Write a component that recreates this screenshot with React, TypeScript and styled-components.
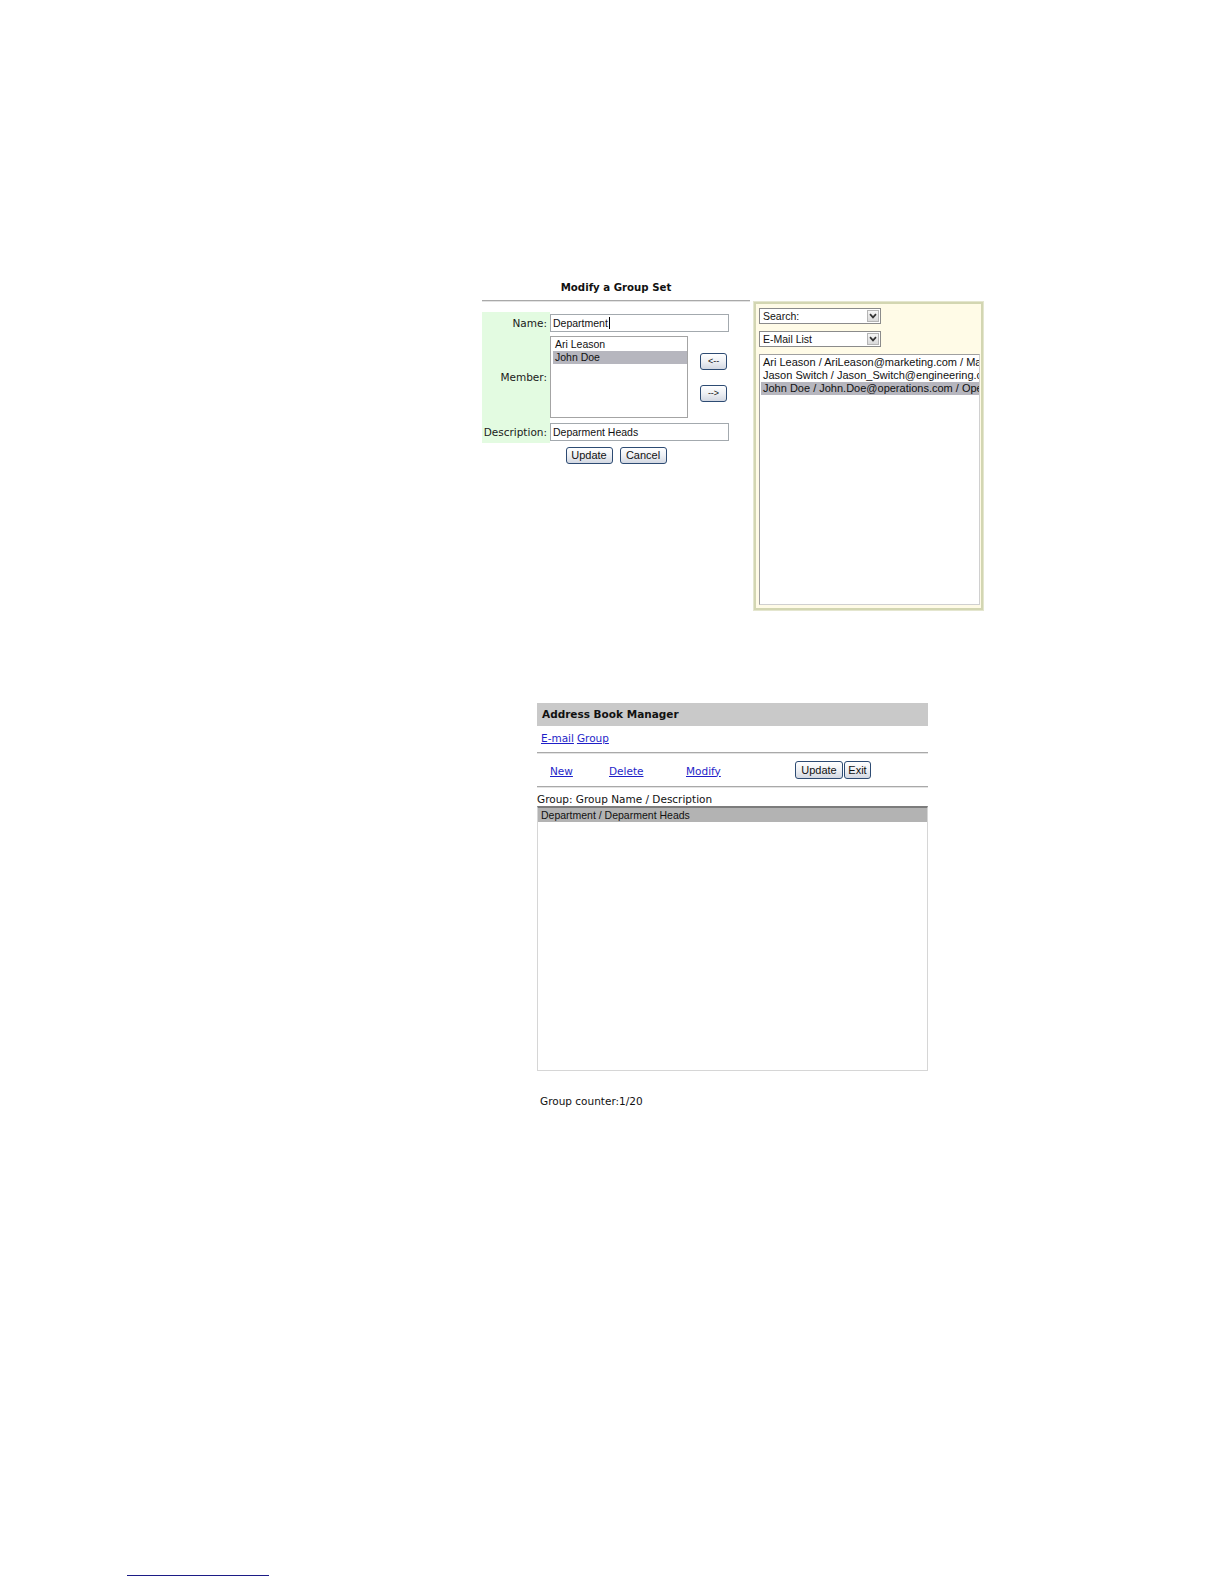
import styled, { createGlobalStyle } from 'styled-components';

const verdana = `'DejaVu Sans', Verdana, sans-serif`;
const arial = `'Liberation Sans', Arial, sans-serif`;

const GlobalStyle = createGlobalStyle`
  html, body {
    margin: 0;
    padding: 0;
    background: #fff;
  }
  body {
    font-family: ${verdana};
    color: #111;
  }
`;

const Page = styled.div`
  width: 1224px;
  min-height: 1584px;
  overflow: hidden;
`;

/* ---------- Modify a Group Set ---------- */

const GroupSet = styled.div`
  display: flex;
  align-items: flex-start;
  gap: 4px;
  margin: 281px 0 0 482px;
`;

const FormColumn = styled.div`
  width: 268px;
`;

const FormTitle = styled.div`
  font: bold 10.2px/14px ${verdana};
  text-align: center;
  color: #111;
`;

const Rule = styled.div<{ $top?: number }>`
  margin-top: ${(p) => p.$top ?? 0}px;
  border-top: 1px solid #a9a9a9;
  border-bottom: 1px solid #e3e3e3;
`;

const FormGrid = styled.div`
  margin-top: 10px;
  display: grid;
  grid-template-columns: 68px 1fr;
  grid-template-rows: 22px 86px 23px;
`;

const Label = styled.div`
  background: #e3fbe1;
  display: flex;
  align-items: center;
  justify-content: flex-end;
  padding-right: 3px;
  font: 10.5px ${verdana};
  color: #1a1a1a;
`;

const FieldCell = styled.div`
  display: flex;
  align-items: center;
  gap: 12px;
`;

const TextBox = styled.div<{ $width: number }>`
  width: ${(p) => p.$width}px;
  height: 18px;
  box-sizing: border-box;
  border: 1px solid #a3a9ae;
  background: #fff;
  padding-left: 2px;
  display: flex;
  align-items: center;
  font: 10.5px ${arial};
  color: #111;
`;

const Caret = styled.span`
  display: inline-block;
  width: 0;
  height: 12px;
  border-left: 1px solid #000;
  margin-left: 1px;
`;

const ListBox = styled.div<{ $width?: number; $height?: number; $padTop: number }>`
  ${(p) => (p.$width ? `width: ${p.$width}px;` : '')}
  ${(p) => (p.$height ? `height: ${p.$height}px;` : '')}
  box-sizing: border-box;
  border: 1px solid #a4a4a4;
  background: #fff;
  padding-top: ${(p) => p.$padTop}px;
  padding-left: 2px;
  overflow: hidden;
`;

const ListItem = styled.div<{ $selected?: boolean; $lh: number; $size?: number }>`
  font: ${(p) => p.$size ?? 10.5}px/${(p) => p.$lh}px ${arial};
  padding-left: 2px;
  white-space: nowrap;
  overflow: hidden;
  color: #111;
  background: ${(p) => (p.$selected ? '#b6b6be' : 'transparent')};
`;

const ArrowStack = styled.div`
  display: flex;
  flex-direction: column;
  gap: 15px;
`;

const Button = styled.button<{ $w: number; $h: number; $size?: number }>`
  width: ${(p) => p.$w}px;
  height: ${(p) => p.$h}px;
  box-sizing: border-box;
  padding: 0;
  border: 1px solid #2d4b73;
  border-radius: 3px;
  background: linear-gradient(#ffffff, #eef0f4 50%, #d3d8e2);
  font: ${(p) => p.$size ?? 11}px/1 ${arial};
  color: #111;
  cursor: pointer;
`;

const FormButtons = styled.div`
  display: flex;
  justify-content: center;
  gap: 7px;
  margin-top: 4px;
`;

const SearchPanel = styled.div`
  margin-top: 21px;
  width: 229px;
  height: 308px;
  box-sizing: border-box;
  border: 2px solid #d3d6b2;
  outline: 1px solid #e4e6cf;
  background: #fffbe7;
  padding: 4px 1px 3px 3px;
  display: flex;
  flex-direction: column;
  gap: 7px;
`;

const Select = styled.div`
  width: 122px;
  height: 16px;
  box-sizing: border-box;
  border: 1px solid #8b8b8b;
  background: #fff;
  display: flex;
  align-items: center;
  justify-content: space-between;
  padding-left: 3px;
  font: 10.5px ${arial};
  color: #111;
`;

const SelectArrow = styled.span`
  width: 12px;
  height: 12px;
  margin-right: 1px;
  box-sizing: border-box;
  border: 1px solid #b5b5b5;
  background: linear-gradient(#f6f6f6, #d9d9d9);
  display: flex;
  align-items: center;
  justify-content: center;
`;

const PanelList = styled(ListBox)`
  flex: 1;
  padding-left: 1px;
  border-color: #a0a0a0 #d0d0d0 #d0d0d0 #a0a0a0;
`;

/* ---------- Address Book Manager ---------- */

const Manager = styled.div`
  width: 391px;
  margin: 93px 0 0 537px;
`;

const ManagerHeader = styled.div`
  height: 23px;
  background: #c9c9c9;
  padding-left: 5px;
  font: bold 10.5px/23px ${verdana};
  color: #111;
`;

const TabLinks = styled.div`
  height: 26px;
  padding: 0 0 2px 4px;
  box-sizing: border-box;
  display: flex;
  align-items: center;
  gap: 3px;
`;

const Link = styled.a`
  font: 10.5px ${verdana};
  color: #1f1fc8;
  text-decoration: underline;
  cursor: pointer;
`;

const ActionRow = styled.div`
  height: 32px;
  padding-left: 13px;
  display: flex;
  align-items: center;
`;

const ActionCell = styled.div<{ $width: number }>`
  width: ${(p) => p.$width}px;
  margin-top: -2px;
`;

const ButtonPair = styled.div`
  display: flex;
  gap: 1px;
`;

const Caption = styled.div`
  margin-top: 4px;
  font: 10.5px/14px ${verdana};
  color: #111;
`;

const GroupList = styled.div`
  height: 265px;
  box-sizing: border-box;
  border-top: 2px solid #7c7c7c;
  border-left: 1px solid #d6d6d6;
  border-right: 1px solid #d6d6d6;
  border-bottom: 1px solid #d6d6d6;
`;

const GroupRow = styled.div<{ $selected?: boolean }>`
  height: 14px;
  padding-left: 3px;
  font: 10.5px/14px ${arial};
  color: #111;
  background: ${(p) => (p.$selected ? '#b3b3b3' : 'transparent')};
`;

const Counter = styled.div`
  margin-top: 23px;
  padding-left: 3px;
  font: 10.5px/14px ${verdana};
  color: #111;
`;

const FootnoteRule = styled.div`
  margin: 467px 0 0 127px;
  width: 142px;
  border-top: 1px solid #1c1c86;
`;

const Chevron = () => (
  <svg width="8" height="6" viewBox="0 0 8 6">
    <path d="M1 1.2 L4 4.4 L7 1.2" fill="none" stroke="#333" strokeWidth="1.7" />
  </svg>
);

const emails = [
  'Ari Leason / AriLeason@marketing.com / Marketing',
  'Jason Switch / Jason_Switch@engineering.com / Engineering',
  'John Doe / John.Doe@operations.com / Operations',
];

export default function App() {
  return (
    <Page>
      <GlobalStyle />

      <GroupSet>
        <FormColumn>
          <FormTitle>Modify a Group Set</FormTitle>
          <Rule $top={5} />
          <FormGrid>
            <Label>Name:</Label>
            <FieldCell>
              <TextBox $width={179}>
                Department
                <Caret />
              </TextBox>
            </FieldCell>

            <Label>Member:</Label>
            <FieldCell>
              <ListBox $width={138} $height={82} $padTop={1}>
                <ListItem $lh={13}>Ari Leason</ListItem>
                <ListItem $lh={13} $selected>
                  John Doe
                </ListItem>
              </ListBox>
              <ArrowStack>
                <Button $w={27} $h={17} $size={9}>
                  &lt;--
                </Button>
                <Button $w={27} $h={17} $size={9}>
                  --&gt;
                </Button>
              </ArrowStack>
            </FieldCell>

            <Label>Description:</Label>
            <FieldCell>
              <TextBox $width={179}>Deparment Heads</TextBox>
            </FieldCell>
          </FormGrid>
          <FormButtons>
            <Button $w={47} $h={17}>
              Update
            </Button>
            <Button $w={47} $h={17}>
              Cancel
            </Button>
          </FormButtons>
        </FormColumn>

        <SearchPanel>
          <Select>
            Search:
            <SelectArrow>
              <Chevron />
            </SelectArrow>
          </Select>
          <Select>
            E-Mail List
            <SelectArrow>
              <Chevron />
            </SelectArrow>
          </Select>
          <PanelList $padTop={1}>
            {emails.map((e, i) => (
              <ListItem key={e} $lh={13} $size={11} $selected={i === 2}>
                {e}
              </ListItem>
            ))}
          </PanelList>
        </SearchPanel>
      </GroupSet>

      <Manager>
        <ManagerHeader>Address Book Manager</ManagerHeader>
        <TabLinks>
          <Link>E-mail</Link>
          <Link>Group</Link>
        </TabLinks>
        <Rule />
        <ActionRow>
          <ActionCell $width={59}>
            <Link>New</Link>
          </ActionCell>
          <ActionCell $width={77}>
            <Link>Delete</Link>
          </ActionCell>
          <ActionCell $width={109}>
            <Link>Modify</Link>
          </ActionCell>
          <ButtonPair>
            <Button $w={48} $h={18}>
              Update
            </Button>
            <Button $w={27} $h={18}>
              Exit
            </Button>
          </ButtonPair>
        </ActionRow>
        <Rule />
        <Caption>Group: Group Name / Description</Caption>
        <GroupList>
          <GroupRow $selected>Department / Deparment Heads</GroupRow>
        </GroupList>
        <Counter>Group counter:1/20</Counter>
      </Manager>

      <FootnoteRule />
    </Page>
  );
}
